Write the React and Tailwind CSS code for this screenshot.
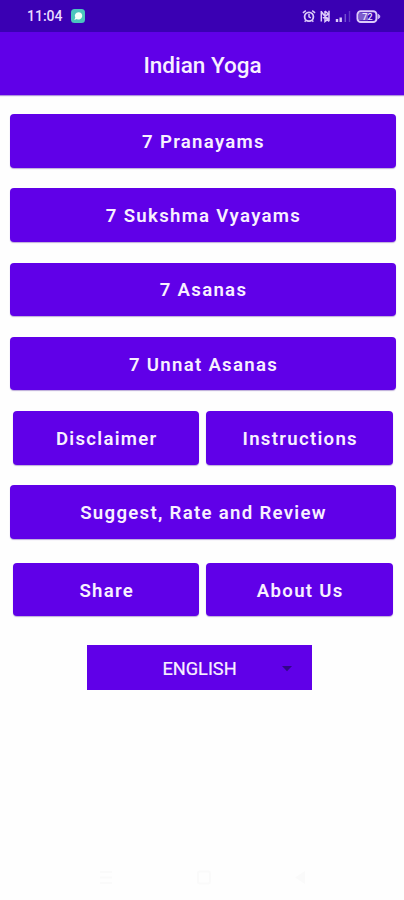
function Button({ children, wide }) {
  return (
    <button
      className={`flex h-[53.5px] items-center justify-center rounded-[4px] bg-[#6000e8] pl-[2px] pt-[4px] text-[18.6px] font-semibold tracking-[1.3px] text-[#f8f0ff] shadow-[0_1px_1px_rgba(70,20,150,0.35)] ${wide ? "w-[386px]" : "w-[186.5px]"}`}
    >
      {children}
    </button>
  );
}

function StatusBar() {
  return (
    <div className="flex h-8 items-center bg-[#3a00b3] text-[#e9dcff]">
      <span className="ml-[27px] w-[44px] whitespace-nowrap text-[14px] font-medium leading-none">11:04</span>
      <svg className="h-[14px] w-[14px]" viewBox="0 0 14 14">
        <rect width="14" height="14" rx="3.5" fill="#4bc5bd" />
        <path d="M7.6 3.2a3.6 3.6 0 1 1-1.8 6.7L3.3 10.9l1-2.3A3.6 3.6 0 0 1 7.6 3.2Z" fill="#f1fff8" />
      </svg>
      <svg className="ml-[217px] h-[14px] w-[80px]" viewBox="0 0 80 14" fill="none" stroke="#dccbfa">
        <circle cx="7" cy="7.7" r="4.4" strokeWidth="1.8" />
        <path d="M7 5v2.8l1.8 1M.9 3.8 3.8 1.7M10.2 1.7l2.9 2.1M3.8 11.4 2.7 12.8M10.2 11.4l1.1 1.4" strokeWidth="1.5" />
        <path d="M19.3 2v10.5M23 2v10.5l3.3-2.6-5.3-4.7M21 9.2l5.3-4.3L23 2M19 2.2l8 10.3M27 1.8v10.5" strokeWidth="1.5" />
        <path d="M35 10v3M38.7 8.5v4.5" strokeWidth="2.4" />
        <path d="M43.3 5v8" stroke="#7450ce" strokeWidth="1.5" />
        <path d="M47.5 2v11" stroke="#6037c5" strokeWidth="1.4" />
        <rect x="55.5" y="2.2" width="19" height="10.8" rx="3.3" strokeWidth="2" />
        <path d="M76.3 5.4v4.2c2-.6 2-3.6 0-4.2Z" fill="#dccbfa" strokeWidth=".7" />
        <path d="M57 3.8h9v7.6h-9z" fill="#7d5ccb" stroke="none" />
        <text x="60.3" y="10.9" fill="#eee5ff" stroke="none" fontFamily="Roboto, sans-serif" fontSize="9" fontWeight="500">72</text>
      </svg>
    </div>
  );
}

export default function App() {
  return (
    <main className="flex h-[900px] w-[404px] flex-col overflow-hidden bg-[#fefefe] font-[Roboto,sans-serif]">
      <StatusBar />
      <header className="flex h-[62.5px] shrink-0 items-center justify-center bg-[#6000e8] pl-[1px] pt-[5px] text-[22.5px] font-medium text-[#f8f0ff] shadow-[0_1px_1px_rgba(80,20,180,0.45)]">
        <h1>Indian Yoga</h1>
      </header>
      <div className="mt-[19.5px] flex flex-col items-center gap-[20.8px] pl-[1px]">
        <Button wide>7 Pranayams</Button>
        <Button wide>7 Sukshma Vyayams</Button>
        <Button wide>7 Asanas</Button>
        <Button wide>7 Unnat Asanas</Button>
        <div className="flex gap-[7px]">
          <Button>Disclaimer</Button>
          <Button>Instructions</Button>
        </div>
        <Button wide>Suggest, Rate and Review</Button>
      </div>
      <div className="mt-[24px] flex justify-center gap-[7px] pl-[1px]">
        <Button>Share</Button>
        <Button>About Us</Button>
      </div>
      <button className="ml-[87px] mt-[28.7px] flex h-[44.5px] w-[224.5px] items-center bg-[#6000e8] text-[18.2px] text-[#f8f0ff]">
        <span className="w-[195px] pl-[30px] pt-[3px] text-center [-webkit-text-stroke:0.2px_#f8f0ff]">ENGLISH</span>
        <svg className="mt-[3px] h-[6px] w-[10px]" viewBox="0 0 10 6">
          <path d="M0 0h10L5 5.2Z" fill="#320588" />
        </svg>
      </button>
      <nav className="mt-auto flex h-[46px] items-center justify-between pl-[99px] pr-[96px] text-[#fafafa]">
        <svg className="h-[15px] w-[14px]" viewBox="0 0 14 15" fill="none" stroke="currentColor" strokeWidth="2">
          <path d="M1 2h12M1 7.5h12M1 13h12" />
        </svg>
        <svg className="h-[15px] w-[14px]" viewBox="0 0 14 15" fill="none" stroke="currentColor" strokeWidth="2">
          <rect x="1" y="1.5" width="12" height="12" rx="2" />
        </svg>
        <svg className="h-[15px] w-[14px]" viewBox="0 0 14 15" fill="currentColor">
          <path d="M1 7.5 11 1v13Z" />
        </svg>
      </nav>
    </main>
  );
}
